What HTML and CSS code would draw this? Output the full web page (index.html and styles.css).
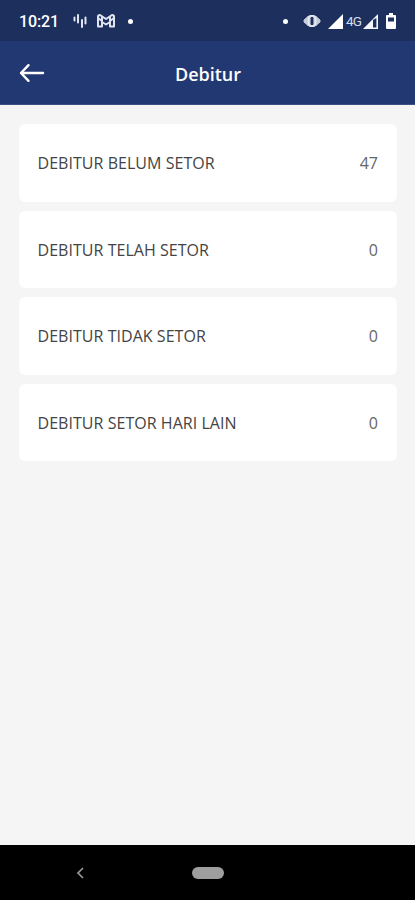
FILE: index.html
```html
<!DOCTYPE html>
<html lang="id">
<head>
    <meta charset="UTF-8">
    <meta name="viewport" content="width=device-width, initial-scale=1.0">
    <title>Debitur</title>
    <link rel="stylesheet" href="styles.css">
</head>
<body>
    <div class="status-bar">
        <span class="time">10:21</span>
        <svg class="icon-sound" width="14" height="16" viewBox="0 0 14 16" fill="none" stroke="#dfe4f0" stroke-width="2" stroke-linecap="round">
            <path d="M1.5 4.5v3M5 2v7.5M9 7v7M12.5 4.5v6"/>
        </svg>
        <svg class="icon-mail" width="18" height="14" viewBox="0 0 18 14" fill="none" stroke="#dfe4f0" stroke-width="2" stroke-linejoin="round">
            <path d="M1 2.5Q1 1 3 1L9 5L15 1Q17 1 17 2.5V12.5H13V8L9 10.5L5 8V12.5H1Z"/>
            <path d="M1 4L5 7V3M17 4L13 7V3"/>
        </svg>
        <span class="dot"></span>
        <div class="status-right">
            <span class="dot"></span>
            <svg class="icon-vibrate" width="18" height="14" viewBox="0 0 18 14">
                <path d="M5 2.5L1 6V8L5 11.5ZM13 2.5L17 6V8L13 11.5Z" fill="#c5ccd9" stroke="#c5ccd9"/>
                <rect x="5.5" y="1.7" width="7" height="10.6" rx="2.5" fill="#c5ccd9" stroke="#e8ecf4" stroke-width="1.5"/>
                <rect x="7.6" y="3" width="2.8" height="8" rx="1" fill="#1d2f5d"/>
            </svg>
            <svg class="icon-signal" width="15" height="15" viewBox="0 0 15 15">
                <path d="M15 0V15H0Z" fill="#fff"/>
            </svg>
            <span class="network">4G</span>
            <svg class="icon-signal2" width="15" height="15" viewBox="0 0 15 15">
                <path d="M15 0V15H0Z" fill="#f4f6fa"/>
                <path d="M10 6V13.5H13.4V4Z" fill="#1d2f5d"/>
            </svg>
            <svg class="icon-battery" width="10" height="16" viewBox="0 0 10 16">
                <path d="M3 0h4v2h2q1 0 1 1v12q0 1-1 1H1q-1 0-1-1V3q0-1 1-1h2z" fill="#fff"/>
                <rect x="2" y="4.5" width="6" height="4" fill="#1d2f5d"/>
            </svg>
        </div>
    </div>

    <header>
        <svg class="back" width="26" height="20" viewBox="0 0 26 20" fill="none" stroke="#fff" stroke-width="2.4" stroke-linecap="round" stroke-linejoin="round">
            <path d="M24 10H2M9.5 2.2L2 10L9.5 17.8"/>
        </svg>
        <h1>Debitur</h1>
    </header>

    <main>
        <div class="card">
            <span class="label">DEBITUR BELUM SETOR</span>
            <span class="count">47</span>
        </div>
        <div class="card">
            <span class="label">DEBITUR TELAH SETOR</span>
            <span class="count">0</span>
        </div>
        <div class="card">
            <span class="label">DEBITUR TIDAK SETOR</span>
            <span class="count">0</span>
        </div>
        <div class="card">
            <span class="label">DEBITUR SETOR HARI LAIN</span>
            <span class="count">0</span>
        </div>
    </main>

    <footer>
        <svg class="nav-back" width="9" height="12" viewBox="0 0 9 12" fill="none" stroke="#999" stroke-width="1.7">
            <path d="M7 1L2 6L7 11"/>
        </svg>
        <span class="nav-home"></span>
    </footer>
</body>
</html>
```
FILE: styles.css
```css
body {
    margin: 0;
    height: 900px;
    display: flex;
    flex-direction: column;
    background-color: #f5f5f5;
    font-family: "Open Sans", sans-serif;
    overflow: hidden;
}
.status-bar {
    height: 41px;
    box-sizing: border-box;
    padding: 1px 19px 0 19px;
    display: flex;
    align-items: center;
    background-color: #1d2f5d;
    color: #fff;
}
.time {
    width: 40px;
    font-family: Roboto, sans-serif;
    font-size: 16px;
    font-weight: 500;
    letter-spacing: -0.1px;
    white-space: nowrap;
}
.icon-sound {
    margin-left: 14px;
}
.icon-mail {
    margin-left: 10px;
}
.dot {
    width: 5px;
    height: 5px;
    border-radius: 50%;
    background-color: #fff;
    margin-left: 13px;
}
.status-right {
    display: flex;
    align-items: center;
    margin-left: auto;
}
.icon-vibrate {
    margin-left: 15px;
}
.icon-signal {
    margin-left: 7px;
}
.network {
    width: 16px;
    margin: 0 1px 0 3px;
    font-family: Roboto, sans-serif;
    font-size: 13.5px;
    letter-spacing: -0.8px;
    color: #d5dbe8;
}
.icon-battery {
    margin-left: 8px;
}
header {
    height: 64px;
    display: flex;
    align-items: center;
    box-sizing: border-box;
    padding: 0 19px;
    background-color: #223873;
    border-bottom: 1px solid #3f5082;
}
.back {
    margin-right: -26px;
}
h1 {
    flex: 1;
    margin: 0;
    padding: 2px 0 0 1px;
    text-align: center;
    font-size: 18px;
    font-weight: 600;
    color: #fff;
}
main {
    flex: 1;
    display: flex;
    flex-direction: column;
    gap: 9px;
    padding: 19px 18px 0 19px;
}
.card {
    height: 77.6px;
    box-sizing: border-box;
    padding: 0.3px 19px 0;
    display: flex;
    align-items: center;
    justify-content: space-between;
    border-radius: 6px;
    background-color: #fff;
    font-size: 16px;
}
.label {
    margin-left: -0.5px;
    color: #444;
    letter-spacing: 0.04px;
}
.count {
    color: #666;
}
footer {
    height: 55px;
    box-sizing: border-box;
    display: flex;
    align-items: center;
    padding-left: 76px;
    background-color: #000;
}
.nav-home {
    width: 32px;
    height: 12px;
    margin-left: 107px;
    border-radius: 6px;
    background-color: #9e9e9e;
}
```
